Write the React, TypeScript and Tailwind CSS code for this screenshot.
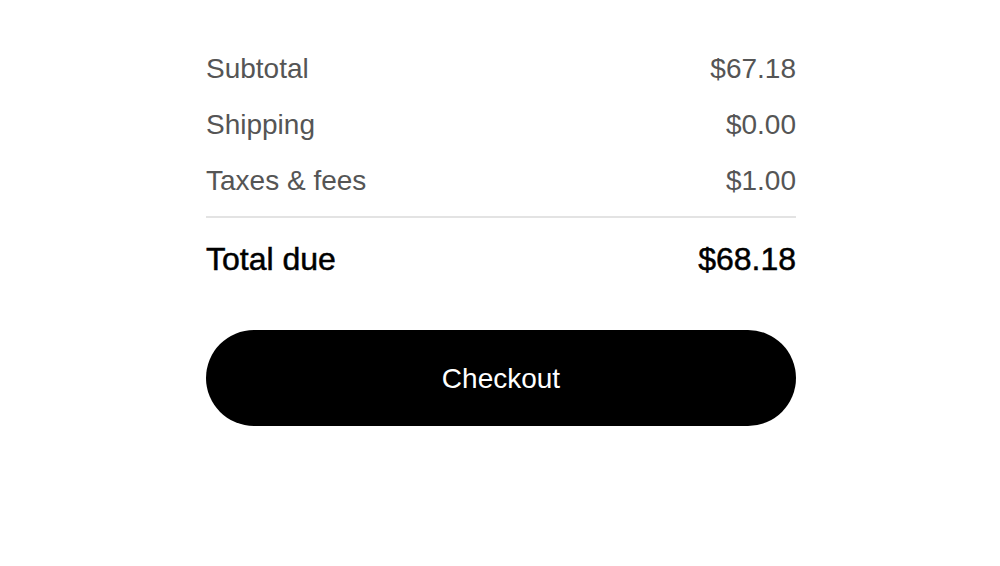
import React from 'react';

type TLine = {
    label: string;
    amount: string;
}

const lines: TLine[] = [
    { label: 'Subtotal', amount: '$67.18' },
    { label: 'Shipping', amount: '$0.00' },
    { label: 'Taxes & fees', amount: '$1.00' },
];

export default function App() {
    return <div className="min-h-screen bg-white flex justify-center pl-[2px]" style={{ fontFamily: '"Liberation Sans", Arial, sans-serif' }}>
        <div className="w-[590px] pt-[41px]">
            {lines.map((line, key) =>
                <div key={key} className="flex items-center justify-between h-14 text-[28px] text-[#555555]">
                    <span>{line.label}</span>
                    <span>{line.amount}</span>
                </div>)}
            <div className="mt-[7px] h-[2px] bg-[#e3e3e3]" />
            <div className="mt-[17px] flex items-center justify-between h-12 text-[32px] text-black [-webkit-text-stroke:0.5px_black]">
                <span>Total due</span>
                <span>$68.18</span>
            </div>
            <button className="mt-[47px] w-full h-24 rounded-full bg-black text-white text-[28px] pt-[2px]">
                Checkout
            </button>
        </div>
    </div>;
}
